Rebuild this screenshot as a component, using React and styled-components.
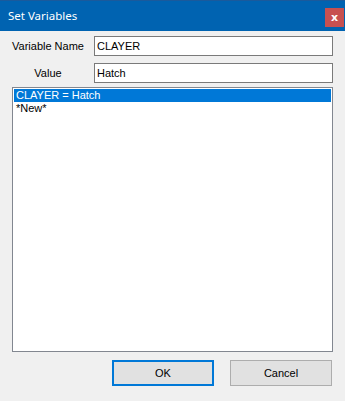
import React, { useState } from "react";
import styled, { createGlobalStyle } from "styled-components";

const GlobalStyle = createGlobalStyle`
  html, body {
    margin: 0;
    padding: 0;
    background: #f0f0f0;
  }
  * {
    box-sizing: border-box;
  }
`;

const Window = styled.div`
  width: 345px;
  height: 401px;
  background: #f0f0f0;
  display: flex;
  flex-direction: column;
  font-family: "Liberation Sans", Arial, sans-serif;
  font-size: 11px;
  color: #000;
  overflow: hidden;
`;

const TitleBar = styled.div`
  height: 31px;
  flex: none;
  background: #0063b1;
  border-top: 1px solid #1a5a9c;
  display: flex;
  align-items: flex-start;
  justify-content: space-between;
`;

const Title = styled.span`
  font-family: "Noto Sans", "Open Sans", sans-serif;
  font-size: 11.5px;
  color: #fff;
  line-height: 30px;
  padding-left: 8px;
`;

const CloseButton = styled.button`
  margin: 7px 1px 0 0;
  width: 19px;
  height: 19px;
  border: none;
  padding: 0;
  background: #c75050;
  color: #fff;
  font-family: "DejaVu Sans", sans-serif;
  font-size: 11px;
  font-weight: bold;
  line-height: 18px;
  text-align: center;
`;

const Body = styled.div`
  flex: 1;
  display: flex;
  flex-direction: column;
  padding: 5px 12px 0 12px;
`;

const FieldRow = styled.div`
  display: flex;
  align-items: center;
  margin-bottom: ${(p) => p.gap}px;
`;

const Label = styled.label`
  width: 82px;
  padding-right: 10px;
  text-align: center;
  white-space: nowrap;
`;

const TextBox = styled.input`
  width: 239px;
  height: 20px;
  border: 1px solid #7a7a7a;
  background: #fff;
  padding: 0 2px;
  font-family: "Liberation Sans", Arial, sans-serif;
  font-size: 11px;
  color: #000;
  outline: none;
`;

const ListBox = styled.div`
  width: 321px;
  height: 265px;
  border: 1px solid #828790;
  background: #fff;
  padding: 1px;
`;

const ListItem = styled.div`
  height: 13px;
  line-height: 13px;
  padding-left: 2px;
  background: ${(p) => (p.selected ? "#0078d7" : "transparent")};
  color: ${(p) => (p.selected ? "#fff" : "#000")};
  white-space: nowrap;
`;

const ButtonRow = styled.div`
  display: flex;
  justify-content: flex-end;
  gap: 16px;
  margin-top: 8px;
  padding-right: 1px;
`;

const Button = styled.button`
  width: 102px;
  height: 26px;
  background: #e1e1e1;
  border: ${(p) => (p.primary ? "2px solid #0078d7" : "1px solid #adadad")};
  font-family: "Liberation Sans", Arial, sans-serif;
  font-size: 11px;
  color: #000;
  padding: 0;
`;

const items = ["CLAYER = Hatch", "*New*"];

export default function App() {
  const [selected, setSelected] = useState(0);

  return (
    <Window>
      <GlobalStyle />
      <TitleBar>
        <Title>Set Variables</Title>
        <CloseButton>x</CloseButton>
      </TitleBar>
      <Body>
        <FieldRow gap={7}>
          <Label>Variable Name</Label>
          <TextBox defaultValue="CLAYER" />
        </FieldRow>
        <FieldRow gap={4}>
          <Label>Value</Label>
          <TextBox defaultValue="Hatch" />
        </FieldRow>
        <ListBox>
          {items.map((item, i) => (
            <ListItem
              key={item}
              selected={i === selected}
              onClick={() => setSelected(i)}
            >
              {item}
            </ListItem>
          ))}
        </ListBox>
        <ButtonRow>
          <Button primary>OK</Button>
          <Button>Cancel</Button>
        </ButtonRow>
      </Body>
    </Window>
  );
}
